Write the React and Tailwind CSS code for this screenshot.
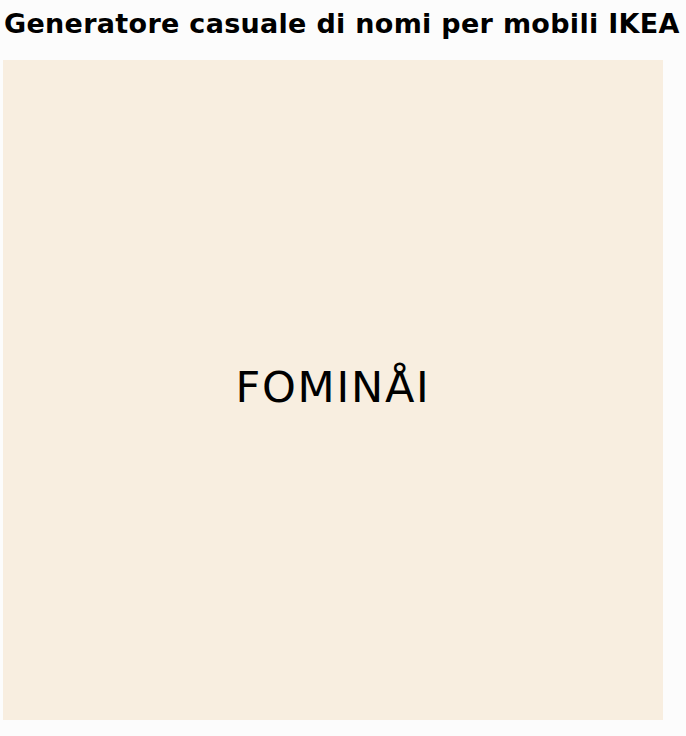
import React from 'react';

const App = () => {
    return (
        <div className="min-h-screen bg-[#fcfcfc] px-[3px] font-['DejaVu_Sans',sans-serif] text-black">
            <h1 className="pt-[6px] pl-[1px] text-[27px] font-bold leading-[36px] tracking-[0.3px] whitespace-nowrap">
                Generatore casuale di nomi per mobili IKEA
            </h1>
            <div className="mt-[18px] flex h-[660px] w-[660px] items-center justify-center bg-[#f8eee0]">
                <span className="pb-[6px] text-[43px] leading-none tracking-[1.8px]">FOMINÅI</span>
            </div>
        </div>
    );
};

export default App;
